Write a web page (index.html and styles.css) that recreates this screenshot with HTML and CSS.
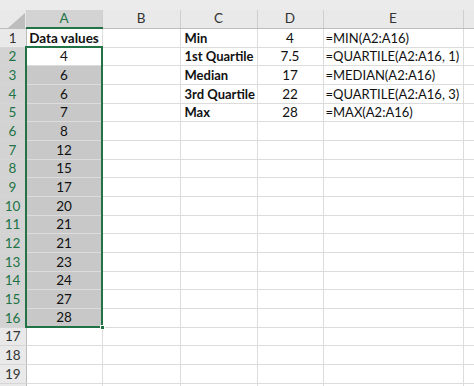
FILE: index.html
```html
<!DOCTYPE html>
<html lang="en">
<head>
    <meta charset="UTF-8">
    <meta name="viewport" content="width=device-width, initial-scale=1.0">
    <title>Quartiles</title>

    <link rel="stylesheet" href="styles.css">
</head>
<body>
    <div class="band"></div>
    <table class="sheet">
        <colgroup>
            <col class="w-head">
            <col class="w-a">
            <col class="w-b">
            <col class="w-c">
            <col class="w-d">
            <col class="w-e">
            <col class="w-f">
        </colgroup>
        <thead>
            <tr>
                <th class="corner">
                    <svg width="17" height="15" viewBox="0 0 17 15"><polygon points="17,0 17,15 0,15" fill="#bdbdbd"/></svg>
                </th>
                <th class="col-sel">A</th>
                <th>B</th>
                <th>C</th>
                <th>D</th>
                <th>E</th>
                <th></th>
            </tr>
        </thead>
        <tbody>
            <tr>
                <th>1</th>
                <td class="num bold">Data values</td>
                <td></td>
                <td class="bold">Min</td>
                <td class="num">4</td>
                <td class="formula">=MIN(A2:A16)</td>
                <td></td>
            </tr>
            <tr>
                <th class="row-sel">2</th>
                <td class="num sel first">4</td>
                <td></td>
                <td class="bold">1st Quartile</td>
                <td class="num">7.5</td>
                <td class="formula">=QUARTILE(A2:A16, 1)</td>
                <td></td>
            </tr>
            <tr>
                <th class="row-sel">3</th>
                <td class="num sel fill">6</td>
                <td></td>
                <td class="bold">Median</td>
                <td class="num">17</td>
                <td class="formula">=MEDIAN(A2:A16)</td>
                <td></td>
            </tr>
            <tr>
                <th class="row-sel">4</th>
                <td class="num sel fill">6</td>
                <td></td>
                <td class="bold">3rd Quartile</td>
                <td class="num">22</td>
                <td class="formula">=QUARTILE(A2:A16, 3)</td>
                <td></td>
            </tr>
            <tr>
                <th class="row-sel">5</th>
                <td class="num sel fill">7</td>
                <td></td>
                <td class="bold">Max</td>
                <td class="num">28</td>
                <td class="formula">=MAX(A2:A16)</td>
                <td></td>
            </tr>
            <tr><th class="row-sel">6</th><td class="num sel fill">8</td><td></td><td></td><td></td><td></td><td></td></tr>
            <tr><th class="row-sel">7</th><td class="num sel fill">12</td><td></td><td></td><td></td><td></td><td></td></tr>
            <tr><th class="row-sel">8</th><td class="num sel fill">15</td><td></td><td></td><td></td><td></td><td></td></tr>
            <tr><th class="row-sel">9</th><td class="num sel fill">17</td><td></td><td></td><td></td><td></td><td></td></tr>
            <tr><th class="row-sel">10</th><td class="num sel fill">20</td><td></td><td></td><td></td><td></td><td></td></tr>
            <tr><th class="row-sel">11</th><td class="num sel fill">21</td><td></td><td></td><td></td><td></td><td></td></tr>
            <tr><th class="row-sel">12</th><td class="num sel fill">21</td><td></td><td></td><td></td><td></td><td></td></tr>
            <tr><th class="row-sel">13</th><td class="num sel fill">23</td><td></td><td></td><td></td><td></td><td></td></tr>
            <tr><th class="row-sel">14</th><td class="num sel fill">24</td><td></td><td></td><td></td><td></td><td></td></tr>
            <tr><th class="row-sel">15</th><td class="num sel fill">27</td><td></td><td></td><td></td><td></td><td></td></tr>
            <tr><th class="row-sel">16</th><td class="num sel fill last">28<span class="handle"></span></td><td></td><td></td><td></td><td></td><td></td></tr>
            <tr><th>17</th><td></td><td></td><td></td><td></td><td></td><td></td></tr>
            <tr><th>18</th><td></td><td></td><td></td><td></td><td></td><td></td></tr>
            <tr><th>19</th><td></td><td></td><td></td><td></td><td></td><td></td></tr>
            <tr><th></th><td></td><td></td><td></td><td></td><td></td><td></td></tr>
        </tbody>
    </table>
</body>
</html>
```

FILE: styles.css
```css
/* General styling */
body, html {
    margin: 0;
    padding: 0;
    background-color: #fff;
    font-family: Lato, "Open Sans", sans-serif;
    font-size: 13px;
    color: #111;
    overflow: hidden;
}

/* Grey strip above the column letters */
.band {
    height: 10px;
    background-color: #ebebeb;
}

/* Sheet grid */
.sheet {
    border-collapse: collapse;
    table-layout: fixed;
    width: 474px;
}

.w-head { width: 26px; }
.w-a { width: 76px; }
.w-b { width: 78px; }
.w-c { width: 77px; }
.w-d { width: 66px; }
.w-e { width: 140px; }
.w-f { width: 11px; }

.sheet td, .sheet th {
    padding: 0;
    overflow: hidden;
    white-space: nowrap;
}

.sheet td {
    border: 1px solid #dcdcdc;
}

/* Column letters */
.sheet thead th {
    height: 17px;
    background-color: #e9e9e9;
    border-right: 1px solid #cfcfcf;
    border-bottom: 1px solid #bdbdbd;
    font-weight: normal;
    font-size: 13.5px;
    color: #333;
    line-height: 17px;
}

.sheet thead th.corner {
    text-align: right;
    vertical-align: bottom;
    line-height: 0;
}

.corner svg {
    margin-right: 1px;
}

.sheet thead th.col-sel {
    background-color: #d3d3d3;
    color: #217346;
    border-bottom: 2px solid #217346;
}

/* Row numbers */
.sheet tbody th {
    background-color: #e9e9e9;
    border-right: 1px solid #bdbdbd;
    border-bottom: 1px solid #d6d6d6;
    font-weight: normal;
    font-size: 13.5px;
    color: #333;
    text-align: center;
}

.sheet tbody th.row-sel {
    background-color: #d3d3d3;
    color: #217346;
    border-right: 2px solid #217346;
}

.sheet tbody tr {
    height: 19px;
}

.sheet tbody tr:nth-child(3n+2) {
    height: 18px;
}

/* Cell contents */
.num {
    text-align: center;
}

.sheet td.num {
    font-size: 13.5px;
}

.bold {
    font-weight: bold;
}

.sheet td.bold:not(.num) {
    padding-left: 4px;
}

.formula {
    padding-left: 2px !important;
}

/* Selected range A2:A16 */
.sheet td.sel {
    border-left: 2px solid #217346;
    border-right: 2px solid #217346;
}

.sheet td.fill {
    background-color: #c8c8c8;
}

.sheet td.first {
    border-top: 2px solid #217346;
}

.sheet td.last {
    border-bottom: 2px solid #217346;
    position: relative;
    overflow: visible;
}

.handle {
    position: absolute;
    right: -4px;
    bottom: -4px;
    width: 5px;
    height: 5px;
    background-color: #217346;
    border: 1px solid #fff;
    box-sizing: border-box;
}
```
